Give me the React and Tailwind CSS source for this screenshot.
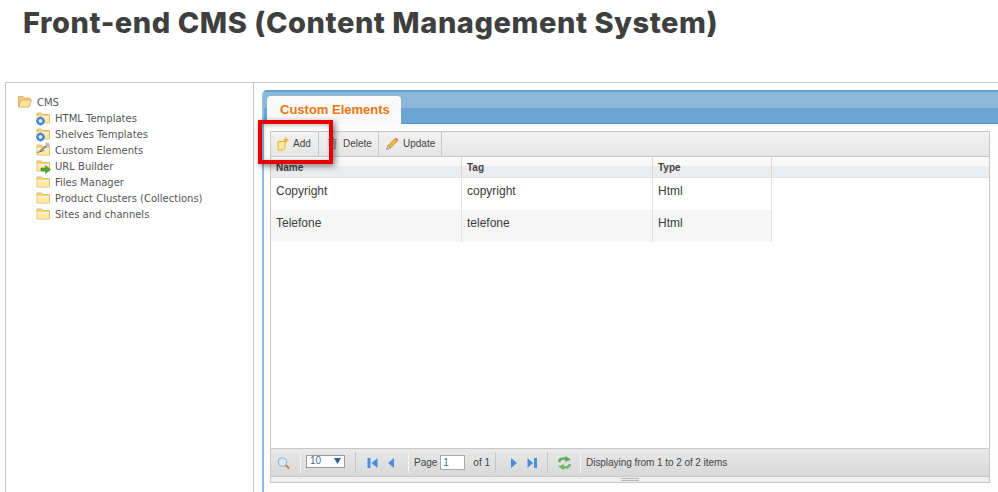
const treeItems = [
  { label: 'HTML Templates', icon: 'gear' },
  { label: 'Shelves Templates', icon: 'gear' },
  { label: 'Custom Elements', icon: 'tool' },
  { label: 'URL Builder', icon: 'arrow' },
  { label: 'Files Manager', icon: 'plain' },
  { label: 'Product Clusters (Collections)', icon: 'plain' },
  { label: 'Sites and channels', icon: 'plain' },
];

const rows = [
  { name: 'Copyright', tag: 'copyright', type: 'Html' },
  { name: 'Telefone', tag: 'telefone', type: 'Html' },
];

function FolderIcon({ kind }) {
  return (
    <svg width="16" height="16" viewBox="0 0 16 16" className="shrink-0">
      <path d="M2 3h4.500l1 1.500H14.500V13H2z" fill="#f6d27a" stroke="#e3bd72" />
      <path d="M2.500 6h11.500v6.500H2.500z" fill="#fbe9a4" />
      <path d="M2.500 6h11.500v1.500H2.500z" fill="#fdf4cf" />
      {kind === 'gear' && (
        <g>
          <circle cx="5.500" cy="11" r="3" fill="#dcecf9" stroke="#3f83cf" strokeWidth="2" />
          <path d="M1 11h2M8 11h2M5.500 6.500v2M5.500 13.500v2" stroke="#3f83cf" strokeWidth="1.600" />
        </g>
      )}
      {kind === 'tool' && (
        <g>
          <path d="M5 9l6.500-5" stroke="#8a8f96" strokeWidth="2" />
          <circle cx="12.500" cy="2.800" r="2.200" fill="#b8bcc2" />
          <path d="M2 10.500l7-2" stroke="#6a7078" strokeWidth="1" />
        </g>
      )}
      {kind === 'arrow' && <path d="M6 10h4.500V7.500l5 4-5 4V13H6z" fill="#4fa52f" stroke="#35801d" strokeWidth="0.500" />}
    </svg>
  );
}

function OpenFolderIcon() {
  return (
    <svg width="14" height="14" viewBox="0 0 14 14" className="shrink-0">
      <path d="M0.500 1.500h4.500l1 1.500h6v2H3L0.500 11z" fill="#f1cf8a" stroke="#dfb066" />
      <path d="M3 5h10.500L11 12H0.500z" fill="#fbe3a2" stroke="#e2b268" />
    </svg>
  );
}

function RefreshIcon() {
  return (
    <svg width="15" height="14" viewBox="0 0 15 14" className="shrink-0">
      <path d="M2 6C2.500 3 6 1.500 10 3.200" fill="none" stroke="#5fae5f" strokeWidth="2.600" />
      <path d="M8.500 0L14 3.600 8 6z" fill="#5fae5f" />
      <path d="M13 8C12.500 11 9 12.500 5 10.800" fill="none" stroke="#6fb86a" strokeWidth="2.600" />
      <path d="M6.500 14L1 10.400 7 8z" fill="#6fb86a" />
    </svg>
  );
}

export default function App() {
  return (
    <div className="relative w-[998px] h-[492px] overflow-hidden bg-white font-['Liberation_Sans',sans-serif] text-[#333]">
      <div className="h-[82px] pl-[23px] pt-[5px]">
        <h1 className="text-[29px] leading-[36px] font-extrabold text-[#3f3f3f] font-['Inter',sans-serif] tracking-[0.55px] whitespace-nowrap">
          Front-end CMS (Content Management System)
        </h1>
      </div>

      <div className="flex h-[410px] ml-[5px] border-t border-l border-[#c8c8c8]">
        {/* tree */}
        <div className="w-[248px] shrink-0 border-r border-[#c8c8c8] pl-[12px] pt-[11px] font-['DejaVu_Sans',sans-serif] text-[10px] text-[#555]">
          <div className="flex items-center gap-[5px] h-[16px]">
            <OpenFolderIcon />
            <span>CMS</span>
          </div>
          <div className="pl-[17px]">
            {treeItems.map((item) => (
              <div key={item.label} className="flex items-center gap-[4px] h-[16px] whitespace-nowrap">
                <FolderIcon kind={item.icon} />
                <span>{item.label}</span>
              </div>
            ))}
          </div>
        </div>

        {/* panel */}
        <div className="flex-1 pl-[8px] pt-[7px]">
          <div className="h-full border-l-2 border-t-2 border-l-[#8dbde4] border-t-[#5d9fd8] rounded-tl-[5px] flex flex-col bg-[#fdfdfd]">
            <div className="h-[32px] shrink-0 border-b border-[#4a97d6] pl-[3px] pt-[4px] bg-gradient-to-b from-[#8ab7da] from-50% to-[#6ca5d3] to-50%">
              <div className="w-[134px] h-[28px] bg-[#f9f9f9] rounded-t-[4px] flex items-center pl-[13px] text-[13px] font-bold text-[#e9760f]">
                Custom Elements
              </div>
            </div>

            <div className="ml-[6px] mr-[8px] mt-[7px] h-[352px] border border-[#c8c8c8] flex flex-col bg-white">
              {/* toolbar */}
              <div className="h-[25px] shrink-0 flex items-center bg-gradient-to-b from-[#f2f2f2] to-[#e6e6e6] border-b border-[#c8c8c8] text-[10px] text-[#444]">
                <div className="flex items-center h-full w-[48px] pl-[6px] pb-[1px] gap-[4px] border-r border-[#c8c8c8]">
                  <svg width="12" height="14" viewBox="0 0 12 14">
                    <path d="M1 4.500h7v7l-2 1.500H1z" fill="#fde9a0" stroke="#edb12f" />
                    <path d="M9 0.500v5M6.500 3h5" stroke="#f2a81d" strokeWidth="1.300" />
                  </svg>
                  <span>Add</span>
                </div>
                <div className="flex items-center h-full w-[60px] pl-[8px] pb-[1px] gap-[5px] border-r border-[#c8c8c8]">
                  <svg width="11" height="13" viewBox="0 0 11 13">
                    <path d="M1 2.500h9M4 1h3" stroke="#8c97a3" strokeWidth="1.200" />
                    <path d="M2 4h7l-.5 8h-6z" fill="#a7b1bc" stroke="#8794a0" strokeWidth="0.600" />
                    <path d="M4.200 5v6M6.800 5v6" stroke="#dde2e7" strokeWidth="0.800" />
                  </svg>
                  <span>Delete</span>
                </div>
                <div className="flex items-center h-full w-[63px] pl-[6px] pb-[1px] gap-[4px] border-r border-[#c8c8c8]">
                  <svg width="14" height="14" viewBox="0 0 14 14">
                    <path d="M3 8.500L10 1.500l2.500 2.500L5.500 11z" fill="#f3b53f" stroke="#c8812a" strokeWidth="0.700" />
                    <path d="M10 1.500l2.500 2.500 1-1-2.500-2.500z" fill="#de6f6a" />
                    <path d="M3 8.500L5.500 11 1.500 12.500z" fill="#f3dfb6" stroke="#555" strokeWidth="0.500" />
                  </svg>
                  <span>Update</span>
                </div>
              </div>

              {/* table header */}
              <div className="h-[21px] shrink-0 flex bg-gradient-to-b from-[#f9f9f9] from-45% to-[#ebecee] to-45% border-b border-[#e2e2e2] text-[10px] font-bold text-[#444]">
                <div className="w-[191px] pl-[5px] pt-[3px] border-r border-[#d8d8d8]">Name</div>
                <div className="w-[191px] pl-[5px] pt-[3px] border-r border-[#d8d8d8]">Tag</div>
                <div className="w-[119px] pl-[5px] pt-[3px] border-r border-[#d8d8d8]">Type</div>
              </div>

              {/* rows */}
              <div className="flex-1 text-[12px] text-[#3c3c3c]">
                {rows.map((row, i) => (
                  <div key={row.name} className={`flex w-[501px] h-[32px] ${i % 2 ? 'bg-[#f6f6f6]' : 'bg-white'}`}>
                    <div className="w-[191px] pl-[5px] pt-[4px] border-r border-[#e2e2e2]">{row.name}</div>
                    <div className="w-[191px] pl-[5px] pt-[4px] border-r border-[#e2e2e2]">{row.tag}</div>
                    <div className="w-[119px] pl-[5px] pt-[4px] border-r border-[#e2e2e2]">{row.type}</div>
                  </div>
                ))}
              </div>

              {/* pager */}
              <div className="h-[28px] shrink-0 flex items-center border-t border-[#c8c8c8] bg-gradient-to-b from-[#e9e9e9] to-[#d8d8d8] pl-[6px] text-[10px] text-[#444]">
                <svg width="13" height="14" viewBox="0 0 13 14" className="shrink-0">
                  <circle cx="5.500" cy="6" r="4.200" fill="#d8e9f7" stroke="#9dbcd8" strokeWidth="1.300" />
                  <path d="M8.800 9.300l3.200 3.200" stroke="#b98a5a" strokeWidth="2.200" />
                </svg>
                <div className="w-[1px] h-[21px] ml-[10px] mr-[5px] bg-[#f4f4f4]" />
                <div className="w-[39px] h-[13px] mb-[3px] bg-white border border-[#9a9a9a] flex items-center justify-between pl-[3px] pr-[3px] text-[#3f6d99] shrink-0">
                  <span className="leading-none">10</span>
                  <svg width="7" height="6" viewBox="0 0 7 6"><path d="M0 0h7L3.500 6z" fill="#2f5f8f" /></svg>
                </div>
                <div className="w-[1px] h-[21px] ml-[10px] mr-[11px] bg-[#c6c6c6]" />
                <svg width="11" height="12" viewBox="0 0 11 12" className="shrink-0">
                  <path d="M0.500 1h3v10h-3z" fill="#4a90d9" />
                  <path d="M10.500 1v10L4.500 6z" fill="#4a90d9" />
                </svg>
                <svg width="8" height="12" viewBox="0 0 8 12" className="shrink-0 ml-[9px]">
                  <path d="M7 1v10L1 6z" fill="#4a90d9" />
                </svg>
                <div className="w-[1px] h-[21px] ml-[13px] mr-[5px] bg-[#f4f4f4]" />
                <span>Page</span>
                <div className="w-[25px] h-[15px] ml-[3px] bg-white border border-[#a8a8a8] pl-[2px] text-[#3f6d99] leading-[13px]">1</div>
                <span className="ml-[8px]">of 1</span>
                <div className="w-[1px] h-[21px] ml-[5px] mr-[14px] bg-[#c6c6c6]" />
                <svg width="8" height="12" viewBox="0 0 8 12" className="shrink-0">
                  <path d="M1 1v10l6-5z" fill="#4a90d9" />
                </svg>
                <svg width="10" height="12" viewBox="0 0 10 12" className="shrink-0 ml-[9px]">
                  <path d="M0.500 1v10l5.500-5z" fill="#4a90d9" />
                  <path d="M7 1h3v10H7z" fill="#4a90d9" />
                </svg>
                <div className="w-[1px] h-[21px] ml-[10px] mr-[9px] bg-[#c6c6c6]" />
                <RefreshIcon />
                <div className="w-[1px] h-[21px] ml-[8px] mr-[5px] bg-[#f4f4f4]" />
                <span className="whitespace-nowrap tracking-[-0.05px]">Displaying from 1 to 2 of 2 items</span>
              </div>

              {/* resize bar */}
              <div className="h-[6px] shrink-0 flex flex-col items-center justify-center gap-[1px] bg-[#efefef] border-t border-[#c8c8c8]">
                <div className="w-[18px] h-[1px] bg-[#b4b4b4]" />
                <div className="w-[18px] h-[1px] bg-[#b4b4b4]" />
              </div>
            </div>
          </div>
        </div>
      </div>

      {/* red highlight */}
      <div className="absolute left-[258px] top-[120px] w-[75px] h-[44px] border-[4px] border-[#e60000] shadow-[2px_2px_6px_rgba(0,0,0,0.5),inset_1px_1px_4px_rgba(0,0,0,0.3)]" />
    </div>
  );
}
